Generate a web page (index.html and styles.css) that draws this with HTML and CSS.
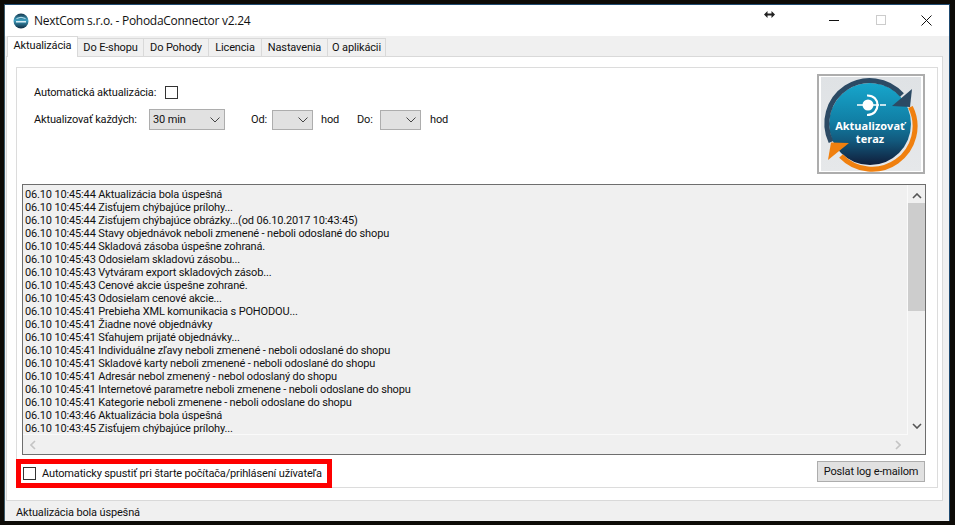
FILE: index.html
```html
<!DOCTYPE html>
<html lang="sk">
<head>
<meta charset="utf-8">
<title>NextCom s.r.o. - PohodaConnector v2.24</title>
<link rel="stylesheet" href="styles.css">
</head>
<body>
<div class="window">
  <header class="titlebar">
    <svg class="app-icon" width="16" height="16" viewBox="0 0 16 16">
      <defs><linearGradient id="lg" x1="0" y1="0" x2="0" y2="1"><stop offset="0" stop-color="#16384e"/><stop offset="0.45" stop-color="#3f9fc0"/><stop offset="1" stop-color="#0d2a40"/></linearGradient></defs>
      <circle cx="8" cy="8" r="7.5" fill="url(#lg)"/>
      <path d="M3.500 5.500 Q8 3 12.500 5.500" stroke="#bfe6f2" fill="none"/>
      <rect x="3" y="8" width="10" height="1.500" fill="#d8eef5"/>
    </svg>
    <span class="title">NextCom s.r.o. - PohodaConnector v2.24</span>
    <svg class="resize" width="11" height="7" viewBox="0 0 11 7"><path d="M0 3.5 3.5 0v2.5h4V0L11 3.5 7.5 7V4.5h-4V7z" fill="#222"/></svg>
    <div class="caption">
      <svg class="cap" width="11" height="11" viewBox="0 0 11 11"><path d="M0 5.5h10" stroke="#111" fill="none"/></svg>
      <svg class="cap" width="11" height="11" viewBox="0 0 11 11"><rect x="1.5" y=".5" width="9" height="9" stroke="#ccc" fill="none"/></svg>
      <svg class="cap" width="11" height="11" viewBox="0 0 11 11"><path d="M.5.5l10 10M10.5.5l-10 10" stroke="#111" fill="none"/></svg>
    </div>
  </header>
  <div class="client">
    <nav class="tabs">
      <div class="tab active t1">Aktualizácia</div>
      <div class="tab t2">Do E-shopu</div>
      <div class="tab t3">Do Pohody</div>
      <div class="tab t4">Licencia</div>
      <div class="tab t5">Nastavenia</div>
      <div class="tab t6">O aplikácii</div>
    </nav>
    <div class="tabpage">
      <section class="group">
        <div class="top">
          <div class="form">
            <div class="row row-auto">
              <span class="lbl w-auto">Automatická aktualizácia:</span>
              <span class="check"></span>
            </div>
            <div class="row row-every">
              <span class="lbl w-every">Aktualizovať každých:</span>
              <div class="select s-wide"><span>30 min</span><svg width="10" height="6" viewBox="0 0 10 6"><path d="M.5.5 5 5 9.5.5" stroke="#444" fill="none"/></svg></div>
              <span class="lbl w-od">Od:</span>
              <div class="select s-small"><span></span><svg width="10" height="6" viewBox="0 0 10 6"><path d="M.5.5 5 5 9.5.5" stroke="#444" fill="none"/></svg></div>
              <span class="lbl w-hod">hod</span>
              <span class="lbl w-do">Do:</span>
              <div class="select s-small"><span></span><svg width="10" height="6" viewBox="0 0 10 6"><path d="M.5.5 5 5 9.5.5" stroke="#444" fill="none"/></svg></div>
              <span class="lbl w-hod2">hod</span>
            </div>
          </div>
          <button class="update">
            <svg width="104" height="96" viewBox="0 0 104 96">
              <defs>
                <linearGradient id="bg" x1="0" y1="0" x2="0" y2="1"><stop offset="0" stop-color="#dfe2e5"/><stop offset="1" stop-color="#e6e8ea"/></linearGradient>
                <linearGradient id="disk" x1="0" y1="0" x2="0" y2="1"><stop offset="0" stop-color="#17a6cc"/><stop offset="0.45" stop-color="#1180a6"/><stop offset="0.7" stop-color="#125a7e"/><stop offset="1" stop-color="#101d3a"/></linearGradient>
              </defs>
              <rect x="2" y="1" width="100" height="94" fill="url(#bg)"/>
              <circle cx="51" cy="48" r="41" fill="url(#disk)"/>
              <path d="M12 66A43 43 0 0 1 83 19" fill="none" stroke="#2c4a64" stroke-width="5"/>
              <path d="M91.5 31A43 43 0 0 1 22 80" fill="none" stroke="#f0800f" stroke-width="5"/>
              <path d="M93 13 73 30 91 31z" fill="#2c4a64"/>
              <path d="M9 84 30 67 12 66.500z" fill="#f0800f"/>
              <circle cx="49" cy="29" r="5.500" fill="#fff"/>
              <path d="M38 29h22M67 29h-6" stroke="#fff" stroke-width="1.600"/>
              <path d="M48 19.500C62 19 62 39 48 39" fill="none" stroke="#fff" stroke-width="2.200"/>
              <text class="icon-text" x="51" y="54" text-anchor="middle">Aktualizovať</text>
              <text class="icon-text" x="51" y="67" text-anchor="middle">teraz</text>
            </svg>
          </button>
        </div>
        <div class="log">
          <div class="log-main">
            <div class="log-lines">
              <div>06.10 10:45:44 Aktualizácia bola úspešná</div>
              <div>06.10 10:45:44 Zisťujem chýbajúce prílohy...</div>
              <div>06.10 10:45:44 Zisťujem chýbajúce obrázky...(od 06.10.2017 10:43:45)</div>
              <div>06.10 10:45:44 Stavy objednávok neboli zmenené - neboli odoslané do shopu</div>
              <div>06.10 10:45:44 Skladová zásoba úspešne zohraná.</div>
              <div>06.10 10:45:43 Odosielam skladovú zásobu...</div>
              <div>06.10 10:45:43 Vytváram export skladových zásob...</div>
              <div>06.10 10:45:43 Cenové akcie úspešne zohrané.</div>
              <div>06.10 10:45:43 Odosielam cenové akcie...</div>
              <div>06.10 10:45:41 Prebieha XML komunikacia s POHODOU...</div>
              <div>06.10 10:45:41 Žiadne nové objednávky</div>
              <div>06.10 10:45:41 Sťahujem prijaté objednávky...</div>
              <div>06.10 10:45:41 Individuálne zľavy neboli zmenené - neboli odoslané do shopu</div>
              <div>06.10 10:45:41 Skladové karty neboli zmenené - neboli odoslané do shopu</div>
              <div>06.10 10:45:41 Adresár nebol zmenený - nebol odoslaný do shopu</div>
              <div>06.10 10:45:41 Internetové parametre neboli zmenene - neboli odoslane do shopu</div>
              <div>06.10 10:45:41 Kategorie neboli zmenene - neboli odoslane do shopu</div>
              <div>06.10 10:43:46 Aktualizácia bola úspešná</div>
              <div>06.10 10:43:45 Zisťujem chýbajúce prílohy...</div>
            </div>
            <div class="vscroll">
              <svg width="10" height="6" viewBox="0 0 10 6"><path d="M1 5 5 1l4 4" stroke="#555" stroke-width="1.600" fill="none"/></svg>
              <div class="thumb"></div>
              <svg width="10" height="6" viewBox="0 0 10 6"><path d="M1 1l4 4 4-4" stroke="#555" stroke-width="1.600" fill="none"/></svg>
            </div>
          </div>
          <div class="hscroll">
            <svg width="6" height="10" viewBox="0 0 6 10"><path d="M5 1 1 5l4 4" stroke="#c4c4c4" stroke-width="1.600" fill="none"/></svg>
            <svg width="6" height="10" viewBox="0 0 6 10"><path d="M1 1l4 4-4 4" stroke="#c4c4c4" stroke-width="1.600" fill="none"/></svg>
          </div>
        </div>
        <div class="bottom">
          <div class="autostart">
            <span class="check"></span>
            <span class="lbl">Automaticky spustiť pri štarte počítača/prihlásení užívateľa</span>
          </div>
          <button class="send">Poslat log e-mailom</button>
        </div>
      </section>
    </div>
    <footer class="status">Aktualizácia bola úspešná</footer>
  </div>
</div>
</body>
</html>
```
FILE: styles.css
```css
* { box-sizing: border-box; }
html, body { margin: 0; height: 100%; }
body {
  background: #0d0b07;
  padding: 4px 5px 4px 4px;
  font: 11px/13px Roboto, "Liberation Sans", Arial, sans-serif;
  letter-spacing: -0.15px;
  color: #111;
  overflow: hidden;
}
.window {
  width: 946px;
  height: 517px;
  border: 1px solid #1f4a70;
  border-left-color: #3c5a6a;
  border-bottom: 0;
  display: flex;
  flex-direction: column;
  background: #f0f0f0;
}
.titlebar {
  height: 31px;
  flex: none;
  background: #fff;
  display: flex;
  align-items: center;
  padding-left: 8px;
}
.app-icon { flex: none; }
.title {
  margin-left: 5px;
  font: 12px/16px "Open Sans", sans-serif;
  letter-spacing: -0.28px;
  white-space: nowrap;
  color: #111;
}
.resize { position: absolute; left: 764px; top: 11px; }
.caption {
  margin-left: auto;
  display: flex;
  align-items: center;
  gap: 35px;
  padding-right: 17px;
}
.cap { display: block; }
.client { flex: 1; display: flex; flex-direction: column; min-height: 0; }
.tabs { display: flex; height: 20px; padding: 0 0 0 2px; flex: none; align-items: flex-end; position: relative; z-index: 1; }
.tab {
  height: 18px;
  background: #f0f0f0;
  border: 1px solid #d9d9d9;
  border-bottom: 0;
  border-left: 0;
  text-align: center;
  line-height: 17px;
  white-space: nowrap;
}
.tab.active { background: #fff; border-left: 1px solid #d9d9d9; margin-bottom: -1px; height: 21px; line-height: 18px; }
.t1 { width: 71px; }
.t2 { width: 66px; }
.t3 { width: 65px; }
.t4 { width: 53px; }
.t5 { width: 66px; }
.t6 { width: 58px; }
.tabpage {
  width: 937px;
  margin-left: 1px;
  height: 445px;
  flex: none;
  background: #fff;
  border: 1px solid #d9d9d9;
  padding: 10px 4px 12px 9px;
}
.group {
  height: 100%;
  border: 1px solid #dcdcdc;
  padding: 6px 12px 0 5px;
  position: relative;
  display: flex;
  flex-direction: column;
}
.top { display: flex; justify-content: space-between; height: 110px; flex: none; }
.form { padding: 11px 0 0 12px; }
.row { display: flex; align-items: center; }
.row-auto { height: 14px; }
.row-every { height: 21px; margin-top: 10px; }
.lbl { white-space: nowrap; }
.w-auto { width: 131px; }
.w-every { width: 115px; }
.w-od { margin-left: 26px; width: 21px; }
.w-hod { margin-left: 8px; width: 36px; }
.w-do { width: 23px; }
.w-hod2 { margin-left: 9px; }
.check {
  display: block;
  width: 13px;
  height: 13px;
  border: 1px solid #333;
  background: #fff;
  flex: none;
}
.select {
  height: 21px;
  background: #e1e1e1;
  border: 1px solid #adadad;
  display: flex;
  align-items: center;
  justify-content: space-between;
  padding: 0 4px 0 3px;
  flex: none;
}
.s-wide { width: 76px; }
.s-small { width: 41px; height: 20px; }
.update {
  width: 108px;
  height: 100px;
  padding: 0;
  background: #fff;
  border: 2px solid #adadad;
  display: block;
}
.update svg { display: block; }
.icon-text { font: 700 11px "Open Sans", sans-serif; fill: #fff; letter-spacing: 0; }
.log {
  width: 904px;
  height: 271px;
  flex: none;
  border: 1px solid #6e6e6e;
  background: #f0f0f0;
  display: flex;
  flex-direction: column;
}
.log-main { height: 250px; flex: none; display: flex; }
.log-lines {
  flex: 1;
  overflow: hidden;
  padding: 3px 0 0 2px;
  border-right: 1px solid #fafafa;
  border-bottom: 1px solid #fafafa;
  white-space: nowrap;
  line-height: 13px;
}
.vscroll {
  width: 17px;
  flex: none;
  display: flex;
  flex-direction: column;
  align-items: center;
  padding-top: 8px;
}
.thumb { width: 17px; height: 108px; background: #cdcdcd; margin-top: 4px; margin-bottom: auto; }
.vscroll svg:last-child { margin-bottom: 6px; }
.hscroll {
  flex: 1;
  display: flex;
  align-items: center;
  justify-content: space-between;
  padding: 0 24px 0 7px;
}
.bottom {
  flex: 1;
  display: flex;
  justify-content: space-between;
  position: relative;
}
.autostart {
  position: absolute;
  left: -6px;
  top: 4px;
  width: 316px;
  height: 29px;
  border: 5px solid #fe0000;
  background: #fff;
  display: flex;
  align-items: center;
  padding-left: 2px;
  gap: 6px;
}
.send {
  margin: 6px 0 0 auto;
  width: 108px;
  height: 21px;
  background: #e1e1e1;
  border: 1px solid #adadad;
  font: inherit;
  letter-spacing: inherit;
  color: #111;
  padding: 0;
}
.status { flex: 1; padding: 4px 0 0 11px; line-height: 15px; }
```
